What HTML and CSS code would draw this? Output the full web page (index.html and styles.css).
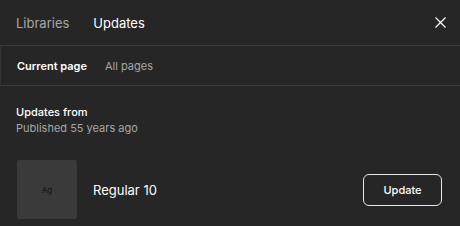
FILE: index.html
```html
<!DOCTYPE html>
<html>
<head>
<meta charset="utf-8">
<link rel="stylesheet" href="styles.css">
</head>
<body>
<div class="panel">
  <div class="header">
    <div class="tabs-top">
      <span class="top-tab">Libraries</span>
      <span class="top-tab active">Updates</span>
    </div>
    <button class="close" aria-label="Close">
      <svg width="11" height="11" viewBox="0 0 11 11"><path d="M0.5 0.5L10.5 10.5M10.5 0.5L0.5 10.5" stroke="#fff" stroke-width="1.2" fill="none"/></svg>
    </button>
  </div>
  <div class="subtabs">
    <span class="sub-tab active">Current page</span>
    <span class="sub-tab">All pages</span>
  </div>
  <div class="section">
    <div class="title">Updates from</div>
    <div class="meta">Published 55 years ago</div>
  </div>
  <div class="row">
    <div class="thumb">Ag</div>
    <div class="name">Regular 10</div>
    <button class="update">Update</button>
  </div>
</div>
</body>
</html>
```
FILE: styles.css
```css
html, body { margin: 0; padding: 0; }
body {
  background: #262626;
  font-family: Inter, "Noto Sans", sans-serif;
  color: #fff;
  width: 460px;
  height: 226px;
  overflow: hidden;
}
.panel { display: flex; flex-direction: column; }
.header {
  height: 45px;
  display: flex;
  align-items: center;
  justify-content: space-between;
  padding: 0 14px 0 16px;
  box-sizing: border-box;
}
.tabs-top { display: flex; gap: 24px; }
.top-tab { font-size: 13px; color: #a6a6a6; }
.top-tab.active { color: #fff; }
.close {
  background: none; border: 0; padding: 0;
  width: 11px; height: 11px; display: flex;
}
.subtabs {
  height: 41px;
  box-sizing: border-box;
  border-top: 1px solid #3a3a3a;
  border-bottom: 1px solid #3a3a3a;
  border-left: 1px solid #333;
  display: flex;
  align-items: center;
  gap: 18px;
  padding-left: 16px;
  font-size: 11px;
}
.sub-tab { color: #a6a6a6; }
.sub-tab.active { color: #fff; font-weight: 600; }
.section { padding: 18px 16px 0 16px; }
.title { font-size: 11px; font-weight: 500; line-height: 16px; }
.meta { font-size: 11px; color: #a6a6a6; line-height: 16px; }
.row {
  display: flex;
  align-items: center;
  padding: 24px 18px 0 17px;
}
.thumb {
  width: 60px; height: 59px;
  background: #3a3a3a;
  border-radius: 2px;
  display: flex; align-items: center; justify-content: center;
  font-size: 8px; color: #111;
}
.name { font-size: 13px; margin-left: 16px; flex: 1; }
.update {
  width: 79px; height: 32px;
  border: 1px solid #e6e6e6;
  border-radius: 6px;
  background: transparent;
  color: #fff;
  font-family: inherit;
  font-size: 11px;
  font-weight: 500;
}
```
